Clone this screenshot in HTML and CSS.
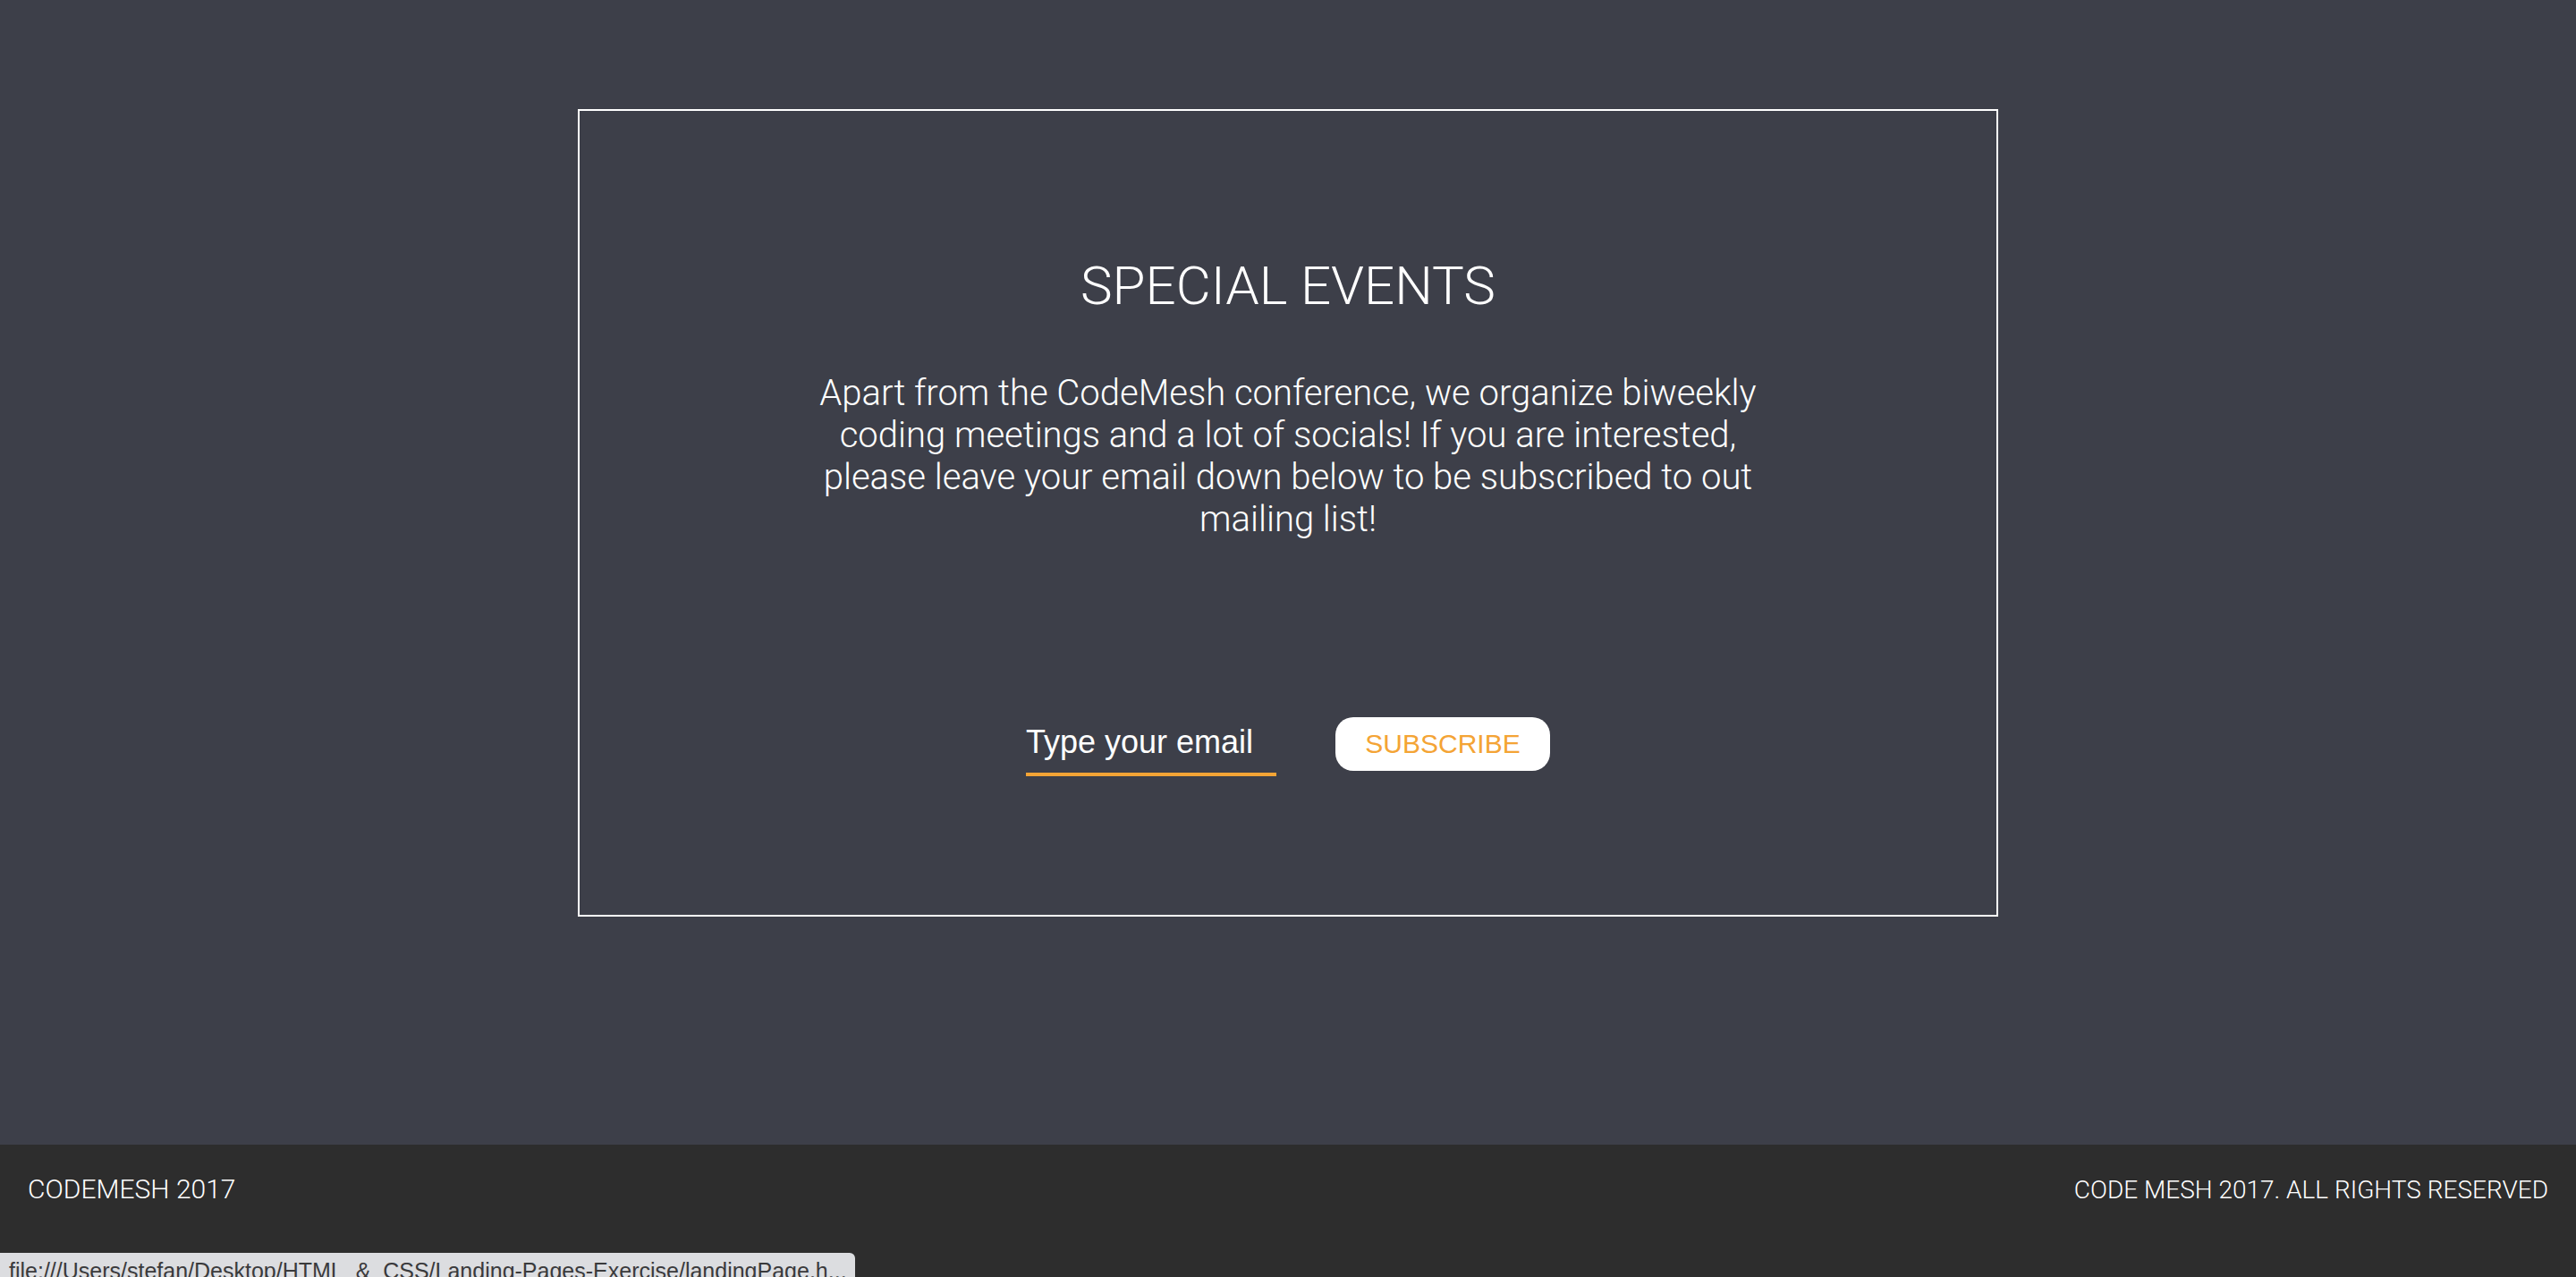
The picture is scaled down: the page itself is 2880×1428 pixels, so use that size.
FILE: index.html
```html
<!DOCTYPE html>
<html lang="en">
<head>
<meta charset="utf-8">
<title>CodeMesh - Special Events</title>
<link rel="stylesheet" href="styles.css">
</head>
<body>
<main class="main">
  <section class="events">
    <h1 class="events-title">SPECIAL EVENTS</h1>
    <p class="events-text">Apart from the CodeMesh conference, we organize biweekly coding meetings and a lot of socials! If you are interested, please leave your email down below to be subscribed to out mailing list!</p>
    <form class="subscribe">
      <input class="subscribe-input" type="email" placeholder="Type your email">
      <button class="subscribe-btn" type="button">SUBSCRIBE</button>
    </form>
  </section>
</main>
<footer class="footer">
  <span class="footer-left">CODEMESH 2017</span>
  <span class="footer-right">CODE MESH 2017. ALL RIGHTS RESERVED</span>
</footer>
<div class="statusbar">file:///Users/stefan/Desktop/HTML_&amp;_CSS/Landing-Pages-Exercise/landingPage.h...</div>
</body>
</html>
```
FILE: styles.css
```css
html, body {
  margin: 0;
  padding: 0;
}
body {
  background: #3d3f49;
  font-family: Roboto, "Liberation Sans", sans-serif;
  font-weight: 300;
  color: #ffffff;
  height: 1428px;
  overflow: hidden;
}
.main {
  padding: 122px 0 255px;
  display: flex;
  justify-content: center;
}
.events {
  box-sizing: border-box;
  width: 1588px;
  height: 903px;
  border: 2px solid #ffffff;
  display: flex;
  flex-direction: column;
  align-items: center;
  padding-top: 160px;
}
.events-title {
  margin: 0;
  font-size: 60px;
  line-height: 72px;
  font-weight: 300;
}
.events-text {
  margin: 61px 0 0;
  width: 1080px;
  font-size: 40px;
  line-height: 46.9px;
  text-align: center;
}
.subscribe {
  margin-top: 197px;
  display: flex;
  align-items: flex-end;
  gap: 66px;
}
.subscribe-input {
  box-sizing: border-box;
  width: 280px;
  height: 59px;
  padding: 0 0 13px;
  margin: 0;
  border: none;
  border-bottom: 4px solid #f4a435;
  background: transparent;
  color: #ffffff;
  font-family: "Liberation Sans", Arial, sans-serif;
  font-size: 36px;
  outline: none;
}
.subscribe-input::placeholder {
  color: #ffffff;
  opacity: 1;
}
.subscribe-btn {
  box-sizing: border-box;
  width: 240px;
  height: 60px;
  margin: 0 0 6px;
  padding: 0;
  border: none;
  border-radius: 20px;
  background: #ffffff;
  color: #f4a435;
  font-family: "Liberation Sans", Arial, sans-serif;
  font-size: 30px;
  cursor: pointer;
}
.footer {
  background: #2d2d2d;
  height: 148px;
  box-sizing: border-box;
  padding: 32px 31px 0;
  display: flex;
  justify-content: space-between;
  align-items: baseline;
  font-size: 30px;
  line-height: 35px;
}
.footer-right {
  font-size: 28px;
}
.statusbar {
  position: fixed;
  left: 0;
  bottom: 0;
  width: 956px;
  height: 27px;
  box-sizing: border-box;
  padding-left: 10px;
  background: #dcdde0;
  border-top-right-radius: 6px;
  color: #3a3a3c;
  font-family: "Liberation Sans", Arial, sans-serif;
  font-weight: 400;
  font-size: 25px;
  line-height: 40px;
  white-space: nowrap;
  overflow: hidden;
}
```
